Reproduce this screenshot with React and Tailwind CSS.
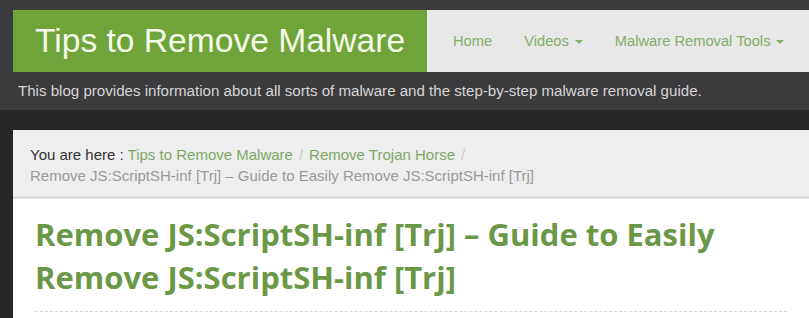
import * as React from "react"

const arial = { fontFamily: '"Liberation Sans", Arial, sans-serif' }

function Caret() {
  return <span className="ml-[6px] inline-block align-middle border-x-[4px] border-t-[4px] border-x-transparent border-t-current" />
}

export default function App() {
  return (
    <div className="w-[809px] h-[318px] overflow-hidden bg-[#262626] flex flex-col" style={arial}>
      <header className="bg-[#3b3a3c] pt-[10px] h-[110px] shrink-0">
        <div className="flex h-[62px] pl-[13px]">
          <div className="w-[414px] bg-[#6ea43a] flex items-center pl-[22px]">
            <h1 className="text-[33.6px] text-[#f4fbe9] leading-none">Tips to Remove Malware</h1>
          </div>
          <nav className="flex-1 bg-[#e8e8e8] flex items-center pl-[26px] gap-[32px] text-[14.7px] text-[#86ad6a]">
            <a>Home</a>
            <a>Videos<Caret /></a>
            <a>Malware Removal Tools<Caret /></a>
          </nav>
        </div>
        <p className="pl-[18px] pt-[8px] text-[15.1px] text-[#d6d6d6]">
          This blog provides information about all sorts of malware and the step-by-step malware removal guide.
        </p>
      </header>

      <main className="flex-1 ml-[13px] mt-[20px] bg-white">
        <div className="bg-[#eeeeee] border-b-[3px] border-[#dcdcdc] px-[17px] pt-[14px] pb-[10px] text-[15px] leading-[21px] text-[#333]">
          <div>
            You are here : <a className="text-[#7fa866]">Tips to Remove Malware</a>
            <span className="text-[#c8c8c8] px-[6px]">/</span>
            <a className="text-[#7fa866]">Remove Trojan Horse</a>
            <span className="text-[#c8c8c8] px-[6px]">/</span>
          </div>
          <div className="text-[#9a9a9a]">Remove JS:ScriptSH-inf [Trj] – Guide to Easily Remove JS:ScriptSH-inf [Trj]</div>
        </div>
        <div className="px-[22px] pt-[14px]">
          <h2 className="text-[31px] font-bold leading-[43px] text-[#6a9846] max-w-[720px]" style={{ fontFamily: '"Open Sans", "Noto Sans", sans-serif' }}>
            Remove JS:ScriptSH-inf [Trj] – Guide to Easily Remove JS:ScriptSH-inf [Trj]
          </h2>
          <div className="mt-[12px] border-t border-dashed border-[#d8d8d8]" />
        </div>
      </main>
    </div>
  )
}
